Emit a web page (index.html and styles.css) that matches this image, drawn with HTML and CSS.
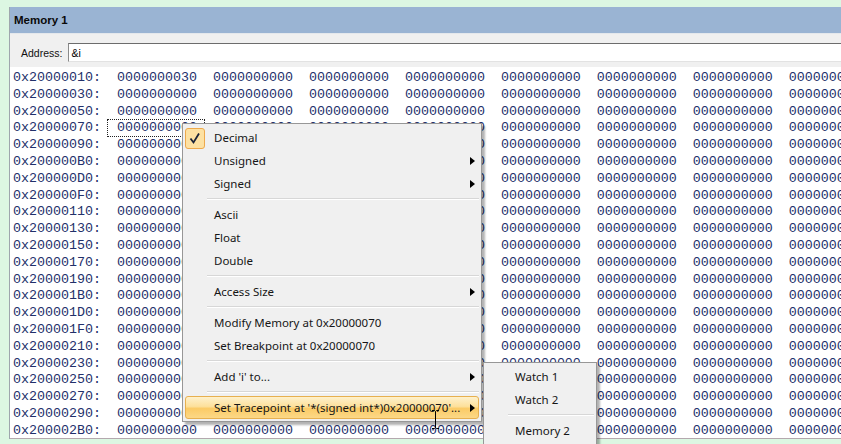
FILE: index.html
```html
<!DOCTYPE html>
<html>
<head>
<meta charset="utf-8">
<link rel="stylesheet" href="styles.css">
</head>
<body>
<div class="window">
  <div class="titlebar">Memory 1</div>
  <div class="addrbar">
    <span class="addr-label">Address:</span>
    <div class="addr-input">&amp;i</div>
  </div>
  <div class="data">
<pre class="dump">0x20000010:  0000000030  0000000000  0000000000  0000000000  0000000000  0000000000  0000000000  0000000000  0000000000
0x20000030:  0000000000  0000000000  0000000000  0000000000  0000000000  0000000000  0000000000  0000000000  0000000000
0x20000050:  0000000000  0000000000  0000000000  0000000000  0000000000  0000000000  0000000000  0000000000  0000000000
0x20000070:  0000000000  0000000000  0000000000  0000000000  0000000000  0000000000  0000000000  0000000000  0000000000
0x20000090:  0000000000  0000000000  0000000000  0000000000  0000000000  0000000000  0000000000  0000000000  0000000000
0x200000B0:  0000000000  0000000000  0000000000  0000000000  0000000000  0000000000  0000000000  0000000000  0000000000
0x200000D0:  0000000000  0000000000  0000000000  0000000000  0000000000  0000000000  0000000000  0000000000  0000000000
0x200000F0:  0000000000  0000000000  0000000000  0000000000  0000000000  0000000000  0000000000  0000000000  0000000000
0x20000110:  0000000000  0000000000  0000000000  0000000000  0000000000  0000000000  0000000000  0000000000  0000000000
0x20000130:  0000000000  0000000000  0000000000  0000000000  0000000000  0000000000  0000000000  0000000000  0000000000
0x20000150:  0000000000  0000000000  0000000000  0000000000  0000000000  0000000000  0000000000  0000000000  0000000000
0x20000170:  0000000000  0000000000  0000000000  0000000000  0000000000  0000000000  0000000000  0000000000  0000000000
0x20000190:  0000000000  0000000000  0000000000  0000000000  0000000000  0000000000  0000000000  0000000000  0000000000
0x200001B0:  0000000000  0000000000  0000000000  0000000000  0000000000  0000000000  0000000000  0000000000  0000000000
0x200001D0:  0000000000  0000000000  0000000000  0000000000  0000000000  0000000000  0000000000  0000000000  0000000000
0x200001F0:  0000000000  0000000000  0000000000  0000000000  0000000000  0000000000  0000000000  0000000000  0000000000
0x20000210:  0000000000  0000000000  0000000000  0000000000  0000000000  0000000000  0000000000  0000000000  0000000000
0x20000230:  0000000000  0000000000  0000000000  0000000000  0000000000  0000000000  0000000000  0000000000  0000000000
0x20000250:  0000000000  0000000000  0000000000  0000000000  0000000000  0000000000  0000000000  0000000000  0000000000
0x20000270:  0000000000  0000000000  0000000000  0000000000  0000000000  0000000000  0000000000  0000000000  0000000000
0x20000290:  0000000000  0000000000  0000000000  0000000000  0000000000  0000000000  0000000000  0000000000  0000000000
0x200002B0:  0000000000  0000000000  0000000000  0000000000  0000000000  0000000000  0000000000  0000000000  0000000000</pre>
    <div class="focus-cell"></div>
  </div>
</div>

<div class="menu main-menu">
  <div class="item checked">
    <span class="check"><svg width="20" height="21" viewBox="0 0 20 21"><path d="M5.5 10.5 L8.5 14.5 L14 5.5" fill="none" stroke="#1b2438" stroke-width="1.8"/></svg></span>
    <span class="label">Decimal</span>
  </div>
  <div class="item"><span class="label">Unsigned</span><span class="arrow"></span></div>
  <div class="item"><span class="label">Signed</span><span class="arrow"></span></div>
  <div class="sep"></div>
  <div class="item"><span class="label">Ascii</span></div>
  <div class="item"><span class="label">Float</span></div>
  <div class="item"><span class="label">Double</span></div>
  <div class="sep"></div>
  <div class="item"><span class="label">Access Size</span><span class="arrow"></span></div>
  <div class="sep"></div>
  <div class="item"><span class="label">Modify Memory at 0x20000070</span></div>
  <div class="item"><span class="label">Set Breakpoint at 0x20000070</span></div>
  <div class="sep"></div>
  <div class="item"><span class="label">Add 'i' to...</span><span class="arrow"></span></div>
  <div class="sep"></div>
  <div class="item hot"><span class="label">Set Tracepoint at '*(signed int*)0x20000070'...</span><span class="arrow"></span></div>
</div>

<div class="menu sub-menu">
  <div class="item"><span class="label">Watch 1</span></div>
  <div class="item"><span class="label">Watch 2</span></div>
  <div class="sep"></div>
  <div class="item"><span class="label">Memory 2</span></div>
</div>

<svg class="ibeam" width="9" height="19" viewBox="0 0 9 19"><path d="M1 0.5 H3.5 L4.5 1.5 L5.5 0.5 H8 M4.5 1.5 V17.5 M1 18.5 H3.5 L4.5 17.5 L5.5 18.5 H8" fill="none" stroke="#000" stroke-width="1"/></svg>
</body>
</html>
```

FILE: styles.css
```css
html, body {
  margin: 0;
  padding: 0;
}
body {
  width: 841px;
  height: 444px;
  overflow: hidden;
  background: #dcf7e2;
  position: relative;
  font-family: "Liberation Sans", Arial, sans-serif;
}
.window {
  margin: 7px 0 0 9px;
  border-left: 1px solid #9ea6ad;
  background: #f0f0f0;
}
.titlebar {
  height: 26px;
  line-height: 26px;
  background: #9ab4d3;
  padding-left: 4px;
  font-weight: bold;
  font-size: 11.5px;
  color: #0a0a0a;
}
.addrbar {
  height: 34px;
  box-sizing: border-box;
  padding: 9px 0 5px 11px;
  display: flex;
  align-items: stretch;
  background: #f0f0f0;
  border-top: 1px solid #e4e8ec;
}
.addr-label {
  font-size: 10.5px;
  color: #111;
  line-height: 20px;
  margin-right: 6px;
}
.addr-input {
  flex: 1;
  background: #fff;
  border-top: 1px solid #6c6c6c;
  border-left: 1px solid #8a8a8a;
  border-bottom: 1px solid #e2e2e2;
  font-size: 10.5px;
  line-height: 19px;
  padding-left: 2px;
  color: #000;
}
.data {
  position: relative;
  background: #fff;
  height: 372px;
  box-sizing: border-box;
  padding: 3px 0 0 3px;
  overflow: hidden;
  border-bottom: 1px solid #b4a8ae;
}
.dump {
  margin: 0;
  font-family: "Liberation Mono", "Courier New", monospace;
  font-size: 13.33px;
  line-height: 16.8px;
  color: #22306a;
  white-space: pre;
}
.focus-cell {
  position: absolute;
  left: 98px;
  top: 53px;
  width: 96px;
  height: 16px;
  outline: 1px dotted #222;
}
.menu {
  position: absolute;
  background: #f0f0f0;
  border: 1px solid #979797;
  padding: 2px;
  box-shadow: 3px 3px 2px rgba(0, 0, 0, 0.3);
  font-family: "Noto Sans", "Open Sans", sans-serif;
  font-size: 11.5px;
  color: #161616;
}
.main-menu {
  left: 182px;
  top: 123px;
  width: 294px;
}
.sub-menu {
  left: 483px;
  top: 362px;
  width: 108px;
  height: 90px;
}
.item {
  height: 23px;
  box-sizing: border-box;
  display: flex;
  align-items: center;
  padding-left: 28px;
  padding-right: 2px;
  position: relative;
  border: 1px solid transparent;
  border-radius: 3px;
}
.label {
  flex: 1;
  white-space: nowrap;
}
.check {
  position: absolute;
  left: -1px;
  top: 1px;
  width: 20px;
  height: 21px;
  box-sizing: border-box;
  background: #fde1a2;
  border: 1px solid #eda94c;
  border-radius: 3px;
}
.check svg {
  position: absolute;
  left: -1px;
  top: -1px;
}
.arrow {
  width: 0;
  height: 0;
  border-top: 4.5px solid transparent;
  border-bottom: 4.5px solid transparent;
  border-left: 5px solid #000;
  margin-right: 1px;
}
.sep {
  height: 1px;
  background: #d7d7d7;
  border-bottom: 1px solid #fff;
  margin: 3px 0 3px 22px;
}
.hot {
  background: linear-gradient(#fef1cc 0%, #fde09b 45%, #fbcb66 55%, #fcd887 100%);
  border-color: #e7b04f;
}
.ibeam {
  position: absolute;
  left: 431px;
  top: 410px;
}
```
